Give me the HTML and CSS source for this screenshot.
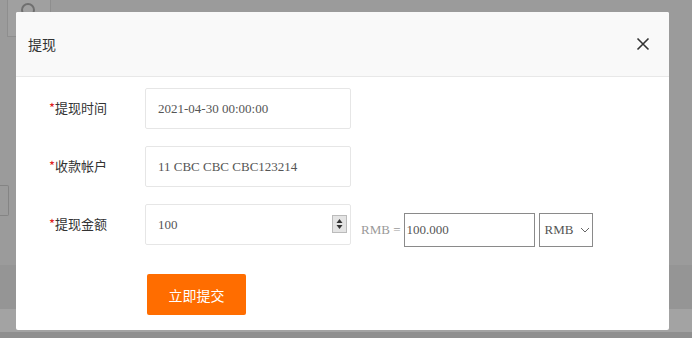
FILE: index.html
```html
<!DOCTYPE html>
<html lang="zh-CN">
<head>
	<meta charset="UTF-8">
	<title>提现</title>
	<link rel="stylesheet" href="styles.css">
</head>
<body>
	<div class="page">
		<div class="page-top">
			<div class="search-btn">
				<svg width="18" height="18" viewBox="0 0 18 18"><circle cx="8" cy="8" r="6" fill="none" stroke="#6f6f6f" stroke-width="2"/></svg>
			</div>
		</div>
		<div class="page-mid">
			<div class="side-box"></div>
		</div>
		<div class="band band-a"></div>
		<div class="band band-b"></div>
		<div class="band band-c"></div>
	</div>

	<div class="modal">
		<div class="modal-head">
			<span class="modal-title">提现</span>
			<span class="modal-close">
				<svg width="14" height="14" viewBox="0 0 14 14"><path d="M1.5 1.5 L12.5 12.5 M12.5 1.5 L1.5 12.5" stroke="#333" stroke-width="1.6" fill="none"/></svg>
			</span>
		</div>
		<div class="modal-body">
			<div class="row">
				<label class="label"><i>*</i>提现时间</label>
				<div class="field">2021-04-30 00:00:00</div>
			</div>
			<div class="row">
				<label class="label"><i>*</i>收款帐户</label>
				<div class="field">11 CBC CBC CBC123214</div>
			</div>
			<div class="row">
				<label class="label"><i>*</i>提现金额</label>
				<div class="field number">100
					<span class="spin">
						<svg width="13" height="16" viewBox="0 0 13 16"><path d="M6.5 3 L9.5 7 L3.5 7 Z M3.5 9 L9.5 9 L6.5 13 Z" fill="#333"/></svg>
					</span>
				</div>
				<div class="convert">
					<span class="eq">RMB =</span>
					<div class="conv-input">100.000</div>
					<div class="conv-select">RMB
						<svg width="10" height="6" viewBox="0 0 10 6"><path d="M1 1 L5 5 L9 1" stroke="#666" stroke-width="1" fill="none"/></svg>
					</div>
				</div>
			</div>
			<div class="actions">
				<button class="submit">立即提交</button>
			</div>
		</div>
	</div>
</body>
</html>
```

FILE: styles.css
```css
*{margin:0;padding:0;box-sizing:border-box;}
html,body{width:692px;height:338px;overflow:hidden;}
body{background:#9b9b9b;font-family:"Noto Sans CJK SC","Noto Sans",sans-serif;position:relative;}

.page{width:692px;height:338px;display:flex;flex-direction:column;}
.page-top{height:40px;padding-left:7px;}
.search-btn{width:44px;height:37px;border:1px solid #8e8e8e;border-top:0;background:#a0a0a0;display:flex;justify-content:center;padding-top:2px;}
.page-mid{height:225px;padding-top:145px;}
.side-box{width:9px;height:31px;border:1px solid #848484;border-left:0;border-radius:0 2px 2px 0;}
.band{width:100%;}
.band-a{height:44px;background:#959595;}
.band-b{height:23px;background:#a3a3a3;}
.band-c{height:6px;background:#8f8f8f;}

.modal{position:absolute;left:16px;top:12px;width:653px;height:318px;background:#fff;border-radius:2px;overflow:hidden;}
.modal-head{height:65px;background:#f9f9f9;border-bottom:1px solid #e8e8e8;display:flex;align-items:center;justify-content:space-between;padding:0 19px 0 12px;}
.modal-title{font-size:14px;color:#333;}
.modal-close{display:flex;}

.modal-body{padding:11px 0 0 33px;}
.row{display:flex;align-items:flex-start;margin-bottom:17px;}
.label{width:96px;height:40px;line-height:40px;font-size:13px;color:#333;}
.label i{font-style:normal;color:#e02020;}
.field{position:relative;width:206px;height:41px;border:1px solid #e6e6e6;border-radius:2px;padding-left:12px;line-height:39px;font-family:"Liberation Serif",serif;font-size:13px;color:#555;}
.spin{position:absolute;right:3px;top:10px;width:15px;height:18px;border:1px solid #bbb;background:#e4e4e4;display:flex;align-items:center;justify-content:center;}

.convert{display:flex;align-items:center;margin:9px 0 0 10px;font-family:"Liberation Serif",serif;font-size:13px;}
.eq{color:#9a9a9a;margin-right:4px;}
.conv-input{width:131px;height:34px;border:1px solid #8a8a8a;line-height:32px;padding-left:1px;color:#555;}
.conv-select{width:54px;height:34px;border:1px solid #8a8a8a;margin-left:4px;display:flex;align-items:center;gap:7px;padding-left:4px;color:#555;}

.actions{padding:10px 0 0 98px;}
.submit{width:99px;height:41px;border:0;border-radius:2px;background:#ff6d00;color:#fff;font-family:"Noto Sans CJK SC",sans-serif;font-size:14px;}
```
